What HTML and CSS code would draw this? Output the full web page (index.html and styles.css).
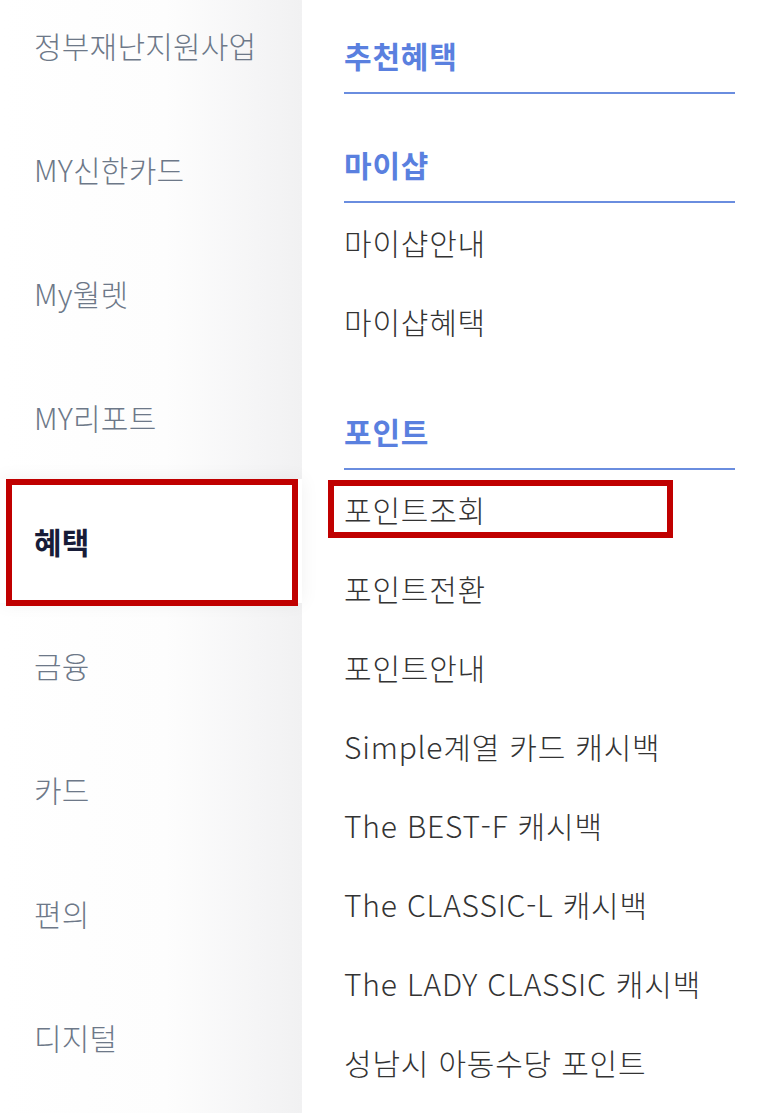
FILE: index.html
```html
<!DOCTYPE html>
<html lang="ko">
<head>
  <meta charset="UTF-8">
  <meta name="viewport" content="width=device-width, initial-scale=1.0">
  <title>혜택 메뉴</title>
  <link rel="stylesheet" href="styles.css">
</head>
<body>
  <div class="menu">
    <ul class="side-nav">
      <li>정부재난지원사업</li>
      <li>MY신한카드</li>
      <li>My월렛</li>
      <li>MY리포트</li>
      <li class="active">혜택<span class="mark mark-nav"></span></li>
      <li>금융</li>
      <li>카드</li>
      <li>편의</li>
      <li>디지털</li>
    </ul>

    <div class="sub-nav">
      <div class="group">
        <h3>추천혜택</h3>
      </div>
      <div class="group">
        <h3>마이샵</h3>
        <ul>
          <li>마이샵안내</li>
          <li>마이샵혜택</li>
        </ul>
      </div>
      <div class="group">
        <h3>포인트</h3>
        <ul>
          <li>포인트조회<span class="mark mark-sub"></span></li>
          <li>포인트전환</li>
          <li>포인트안내</li>
          <li>Simple계열 카드 캐시백</li>
          <li>The BEST-F 캐시백</li>
          <li>The CLASSIC-L 캐시백</li>
          <li>The LADY CLASSIC 캐시백</li>
          <li>성남시 아동수당 포인트</li>
        </ul>
      </div>
    </div>
  </div>
</body>
</html>
```

FILE: styles.css
```css
body {
  margin: 0;
  font-family: "Noto Sans CJK KR", "Noto Sans", sans-serif;
  background: #fff;
  overflow: hidden;
}
ul {
  list-style: none;
  margin: 0;
  padding: 0;
}
.menu {
  display: flex;
  height: 1113px;
  overflow: hidden;
}
.side-nav {
  width: 302px;
  flex-shrink: 0;
  background: linear-gradient(to right, #ffffff 0%, #fdfdfd 55%, #f5f5f6 85%, #f1f1f2 100%);
  margin-top: -17px;
}
.side-nav li {
  position: relative;
  height: 124px;
  line-height: 124px;
  padding-left: 34px;
  font-size: 30px;
  font-weight: 300;
  color: #6d7888;
  letter-spacing: 0.2px;
}
.side-nav li.active {
  background: #fff;
  color: #171c38;
  font-weight: 700;
  box-shadow: 0 0 18px rgba(0, 0, 0, 0.06);
  z-index: 1;
}
.sub-nav {
  flex: 1;
  padding: 35px 42px 0 42px;
}
.group + .group {
  margin-top: 50px;
}
.group h3 {
  margin: 0;
  font-size: 30px;
  line-height: 40px;
  font-weight: 700;
  color: #5a80df;
  padding-bottom: 17px;
  border-bottom: 2px solid #6a8ddf;
  letter-spacing: 0.8px;
}
.group li {
  position: relative;
  height: 79px;
  line-height: 79px;
  font-size: 30px;
  font-weight: 300;
  color: #333;
  letter-spacing: 0.8px;
}
.mark {
  position: absolute;
  border: 6px solid #c00000;
  box-sizing: border-box;
  pointer-events: none;
}
.mark-nav {
  top: 0;
  left: 6px;
  width: 292px;
  height: 127px;
}
.mark-sub {
  top: 10px;
  left: -16px;
  width: 345px;
  height: 58px;
}
```
